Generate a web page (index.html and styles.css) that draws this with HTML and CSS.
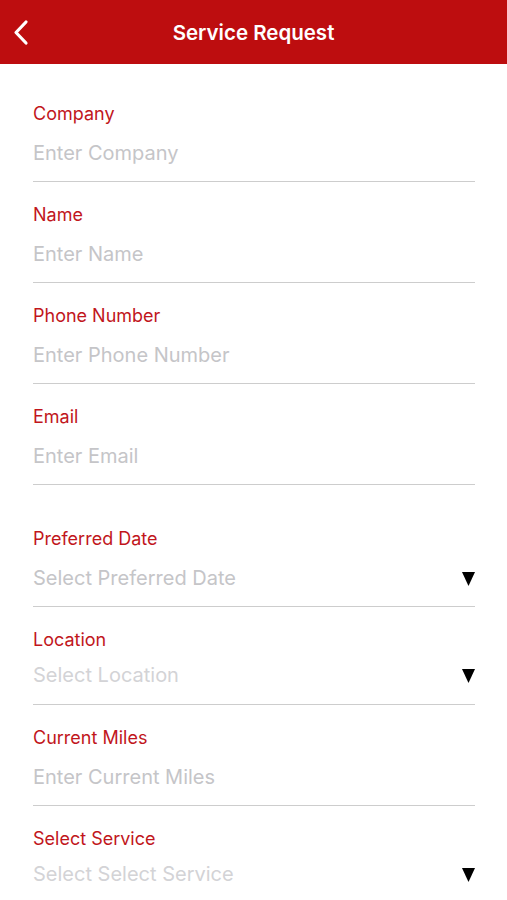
FILE: index.html
```html
<!DOCTYPE html>
<html lang="en">
<head>
<meta charset="utf-8">
<title>Service Request</title>
<link rel="stylesheet" href="styles.css">
</head>
<body>
<header class="topbar">
  <button class="back" aria-label="Back">
    <svg width="18" height="28" viewBox="0 0 18 28"><path d="M14 3 L4 13.5 L14 24" fill="none" stroke="#fff" stroke-width="3.2" stroke-linecap="round" stroke-linejoin="round"/></svg>
  </button>
  <h1 class="title">Service Request</h1>
</header>
<main class="form">
  <div class="field">
    <div class="label">Company</div>
    <div class="value"><span class="ph">Enter Company</span></div>
  </div>
  <div class="field">
    <div class="label">Name</div>
    <div class="value"><span class="ph">Enter Name</span></div>
  </div>
  <div class="field">
    <div class="label">Phone Number</div>
    <div class="value"><span class="ph">Enter Phone Number</span></div>
  </div>
  <div class="field">
    <div class="label">Email</div>
    <div class="value"><span class="ph">Enter Email</span></div>
  </div>
  <div class="field field-spaced">
    <div class="label">Preferred Date</div>
    <div class="value"><span class="ph">Select Preferred Date</span><svg class="caret" width="13" height="14" viewBox="0 0 13 14"><polygon points="0,0 13,0 6.5,14" fill="#000"/></svg></div>
  </div>
  <div class="field field-compact">
    <div class="label">Location</div>
    <div class="value"><span class="ph ph-light">Select Location</span><svg class="caret" width="13" height="14" viewBox="0 0 13 14"><polygon points="0,0 13,0 6.5,14" fill="#000"/></svg></div>
  </div>
  <div class="field">
    <div class="label">Current Miles</div>
    <div class="value"><span class="ph">Enter Current Miles</span></div>
  </div>
  <div class="field field-compact">
    <div class="label">Select Service</div>
    <div class="value"><span class="ph ph-light">Select Select Service</span><svg class="caret" width="13" height="14" viewBox="0 0 13 14"><polygon points="0,0 13,0 6.5,14" fill="#000"/></svg></div>
  </div>
</main>
</body>
</html>
```
FILE: styles.css
```css
html, body {
  margin: 0;
  padding: 0;
  background: #fff;
  font-family: Inter, "Noto Sans", "Liberation Sans", Arial, sans-serif;
  overflow: hidden;
}
.topbar {
  height: 64px;
  background: #bd0d0f;
  display: flex;
  align-items: center;
  justify-content: center;
  position: relative;
}
.back {
  position: absolute;
  left: 9px;
  top: 18px;
  width: 24px;
  height: 30px;
  padding: 0;
  border: 0;
  background: transparent;
  display: flex;
  align-items: center;
  justify-content: center;
}
.title {
  margin: 0;
  color: #fff;
  font-size: 20.5px;
  font-weight: 600;
  line-height: 24px;
  padding-top: 2px;
}
.form {
  padding: 39px 32px 0 33px;
  display: flex;
  flex-direction: column;
  gap: 22px;
}
.field {
  border-bottom: 1px solid #cdcdcd;
  padding-bottom: 16px;
}
.field-spaced {
  margin-top: 21px;
}
.label {
  color: #c1161c;
  font-size: 18px;
  line-height: 20px;
  height: 20px;
  padding-top: 1px;
}
.value {
  margin-top: 17px;
  height: 24px;
  display: flex;
  align-items: center;
  justify-content: space-between;
}
.field-compact .value {
  margin-top: 13px;
  padding-bottom: 1px;
}
.ph {
  color: #c5c5c8;
  font-size: 20px;
  line-height: 24px;
}
.ph-light {
  color: #d3d3d6;
}
.caret {
  display: block;
  margin-top: 1px;
}
```
